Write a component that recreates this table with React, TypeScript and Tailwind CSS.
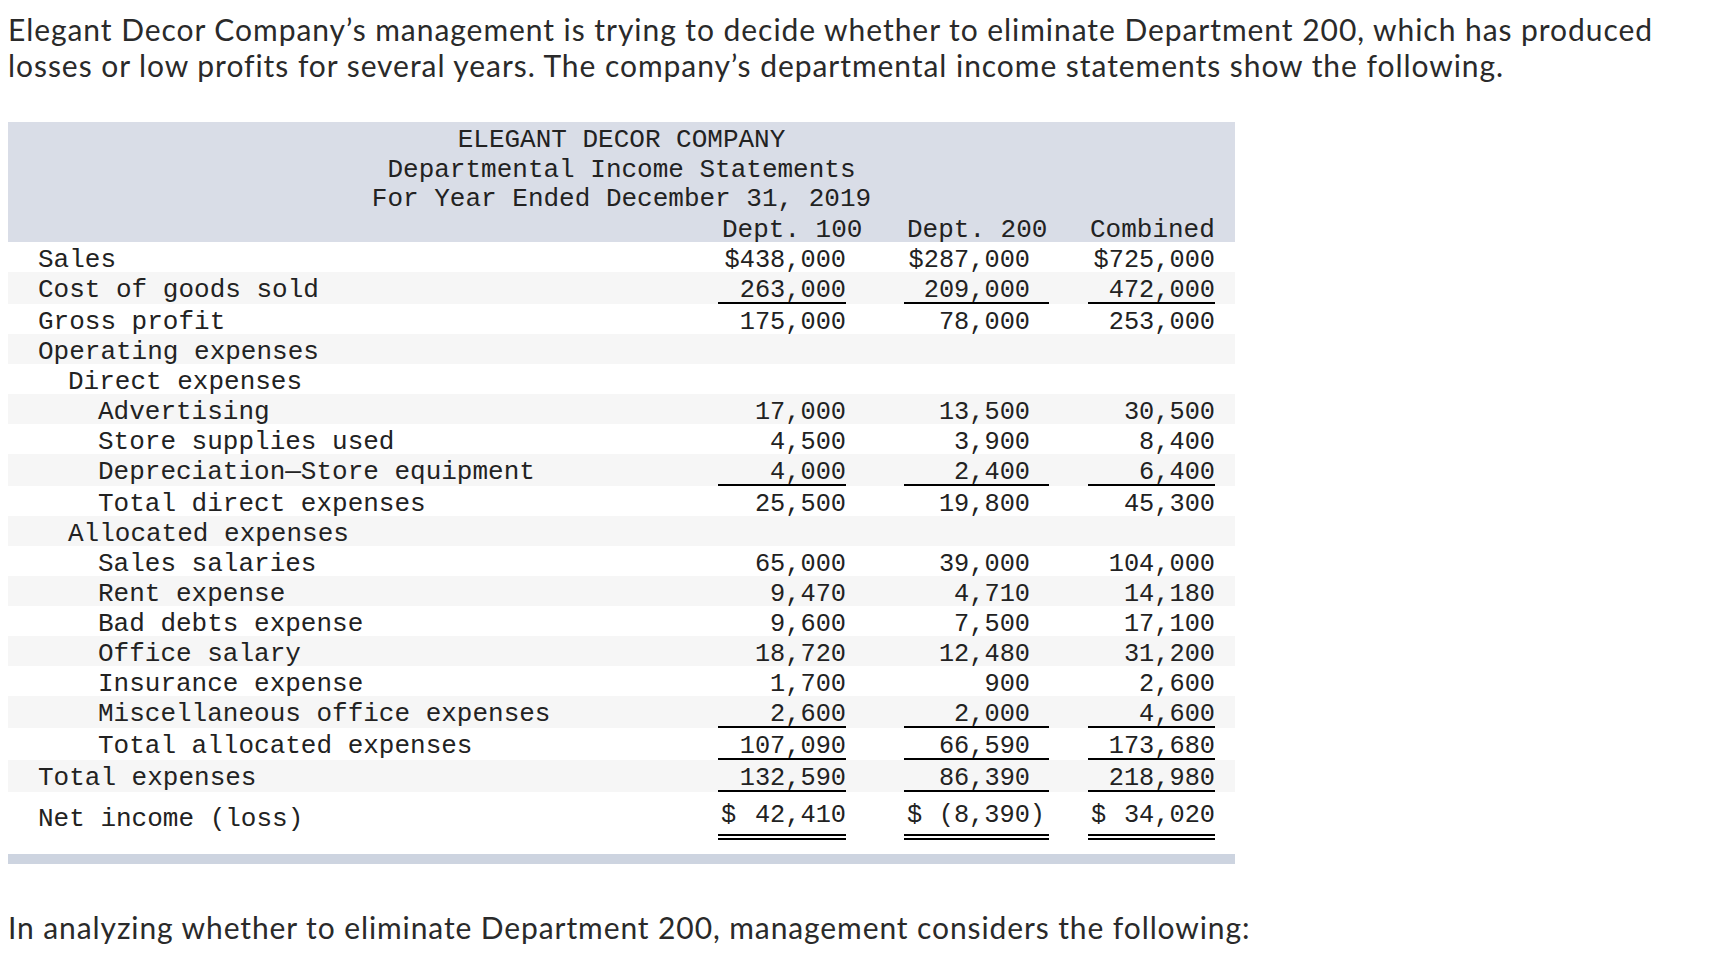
type Row = {
  label: string
  indent: number
  values?: [string, string, string]
  underline?: boolean
}

const rows: Row[] = [
  { label: "Sales", indent: 0, values: ["$438,000", "$287,000", "$725,000"] },
  { label: "Cost of goods sold", indent: 0, values: ["263,000", "209,000", "472,000"], underline: true },
  { label: "Gross profit", indent: 0, values: ["175,000", "78,000", "253,000"] },
  { label: "Operating expenses", indent: 0 },
  { label: "Direct expenses", indent: 1 },
  { label: "Advertising", indent: 2, values: ["17,000", "13,500", "30,500"] },
  { label: "Store supplies used", indent: 2, values: ["4,500", "3,900", "8,400"] },
  { label: "Depreciation\u2014Store equipment", indent: 2, values: ["4,000", "2,400", "6,400"], underline: true },
  { label: "Total direct expenses", indent: 2, values: ["25,500", "19,800", "45,300"] },
  { label: "Allocated expenses", indent: 1 },
  { label: "Sales salaries", indent: 2, values: ["65,000", "39,000", "104,000"] },
  { label: "Rent expense", indent: 2, values: ["9,470", "4,710", "14,180"] },
  { label: "Bad debts expense", indent: 2, values: ["9,600", "7,500", "17,100"] },
  { label: "Office salary", indent: 2, values: ["18,720", "12,480", "31,200"] },
  { label: "Insurance expense", indent: 2, values: ["1,700", "900", "2,600"] },
  { label: "Miscellaneous office expenses", indent: 2, values: ["2,600", "2,000", "4,600"], underline: true },
  { label: "Total allocated expenses", indent: 2, values: ["107,090", "66,590", "173,680"], underline: true },
  { label: "Total expenses", indent: 0, values: ["132,590", "86,390", "218,980"], underline: true },
]

const indents = ["pl-[30px]", "pl-[60px]", "pl-[90px]"]

function Cells({ values, underline }: { values?: [string, string, string]; underline?: boolean }) {
  const line = underline ? "h-[32px] border-b-2 border-black" : "h-[30px]"
  return (
    <div className="flex pr-[20px] font-['Liberation_Mono',monospace] text-[25.3px] leading-[24px]">
      <div className={`w-[128px] pt-[7px] text-right ${line}`}>{values?.[0]}</div>
      <div className={`ml-[58px] w-[145px] pr-[19px] pt-[7px] text-right ${line}`}>{values?.[1]}</div>
      <div className={`ml-[39px] w-[127px] pt-[7px] text-right ${line}`}>{values?.[2]}</div>
    </div>
  )
}

export default function App() {
  return (
    <div className="min-h-screen bg-white pl-[8px] pt-[11px] text-[#222] font-['Lato',sans-serif]">
      <p className="text-[30px] leading-[36px] tracking-[0.95px] text-[#2a2a2a]">
        Elegant Decor Company’s management is trying to decide whether to eliminate Department 200, which has produced
        <br />
        losses or low profits for several years. The company’s departmental income statements show the following.
      </p>

      <div className="mt-[39px] w-[1227px] font-['Liberation_Mono',monospace] text-[26px] text-[#222]">
        <div className="h-[120px] bg-[#d9dde7] pt-[4px]">
          <div className="h-[29.5px] text-center leading-[29.5px]">ELEGANT DECOR COMPANY</div>
          <div className="h-[29.5px] text-center leading-[29.5px]">Departmental Income Statements</div>
          <div className="h-[29.5px] text-center leading-[29.5px]">For Year Ended December 31, 2019</div>
          <div className="flex h-[27.5px] justify-end whitespace-nowrap pr-[20px] pt-[2px] leading-[27.5px]">
            <div className="w-[128px] pl-[4px]">Dept. 100</div>
            <div className="ml-[58px] w-[145px] pl-[3px]">Dept. 200</div>
            <div className="ml-[39px] w-[127px] pl-[2px]">Combined</div>
          </div>
        </div>

        {rows.map((row, i) => (
          <div key={i} className={`flex items-start justify-between ${i % 2 === 0 ? "bg-white" : "bg-[#f6f6f6]"}`}>
            <div className={`h-[30px] whitespace-nowrap pt-[7px] leading-[23px] ${indents[row.indent]}`}>{row.label}</div>
            <Cells values={row.values} underline={row.underline} />
          </div>
        ))}

        <div className="flex h-[48px] items-start justify-between bg-white">
          <div className="pl-[30px] pt-[12px] leading-[30px]">Net income (loss)</div>
          <div className="flex pr-[20px] font-['Liberation_Mono',monospace] text-[25.3px] leading-[30px]">
            <div className="flex h-[48px] w-[128px] justify-between border-b-[6px] border-double border-black pl-[3px] pt-[9px]">
              <span>$</span>
              <span>42,410</span>
            </div>
            <div className="ml-[58px] flex h-[48px] w-[145px] justify-between border-b-[6px] border-double border-black pl-[3px] pr-[4px] pt-[9px]">
              <span>$</span>
              <span>(8,390)</span>
            </div>
            <div className="ml-[39px] flex h-[48px] w-[127px] justify-between border-b-[6px] border-double border-black pl-[3px] pt-[9px]">
              <span>$</span>
              <span>34,020</span>
            </div>
          </div>
        </div>

        <div className="mt-[14px] h-[10px] bg-[#cdd4e0]" />
      </div>

      <p className="mt-[45px] text-[30px] leading-[36px] tracking-[0.9px] text-[#2a2a2a]">
        In analyzing whether to eliminate Department 200, management considers the following:
      </p>
    </div>
  )
}
